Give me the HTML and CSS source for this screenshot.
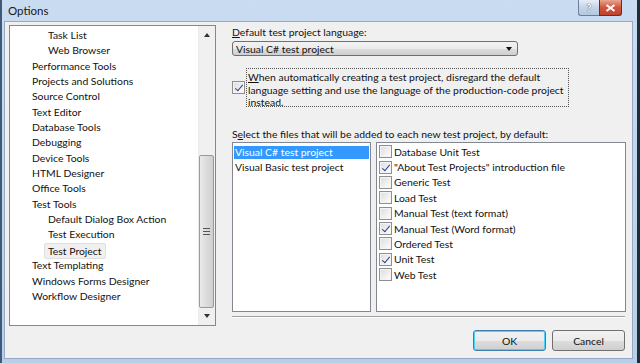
FILE: index.html
```html
<!DOCTYPE html>
<html>
<head>
<meta charset="utf-8">
<link rel="stylesheet" href="styles.css">
</head>
<body>
<div class="window">
  <div class="titlebar">
    <span class="title">Options</span>
    <div class="caption-btns">
      <div class="cbtn help">?</div>
      <div class="cbtn close">
        <svg width="11" height="8" viewBox="0 0 11 8"><path d="M1.5 1 L9.5 7 M9.5 1 L1.5 7" stroke="#fff" stroke-width="2" fill="none"/></svg>
      </div>
    </div>
  </div>
  <div class="client">
    <div class="main">
      <div class="tree">
        <ul class="tree-items">
          <li class="l2">Task List</li>
          <li class="l2">Web Browser</li>
          <li class="l1">Performance Tools</li>
          <li class="l1">Projects and Solutions</li>
          <li class="l1">Source Control</li>
          <li class="l1">Text Editor</li>
          <li class="l1">Database Tools</li>
          <li class="l1">Debugging</li>
          <li class="l1">Device Tools</li>
          <li class="l1">HTML Designer</li>
          <li class="l1">Office Tools</li>
          <li class="l1">Test Tools</li>
          <li class="l2">Default Dialog Box Action</li>
          <li class="l2">Test Execution</li>
          <li class="l2"><span class="sel">Test Project</span></li>
          <li class="l1">Text Templating</li>
          <li class="l1">Windows Forms Designer</li>
          <li class="l1">Workflow Designer</li>
        </ul>
        <div class="vscroll">
          <div class="arrow up"></div>
          <div class="track">
            <div class="thumb"><span class="grip"></span></div>
          </div>
          <div class="arrow down"></div>
        </div>
      </div>
      <div class="panel">
        <div class="label"><u>D</u>efault test project language:</div>
        <div class="combo">
          <span>Visual C# test project</span>
          <span class="combo-arrow"></span>
        </div>
        <div class="check-row">
          <span class="cb checked"></span>
          <div class="focus-text"><u>W</u>hen automatically creating a test project, disregard the default<br>language setting and use the language of the production-code project<br>instead.</div>
        </div>
        <div class="label label2">S<u>e</u>lect the files that will be added to each new test project, by default:</div>
        <div class="lists">
          <ul class="list left-list">
            <li class="hl">Visual C# test project</li>
            <li>Visual Basic test project</li>
          </ul>
          <ul class="list right-list">
            <li><span class="cb"></span>Database Unit Test</li>
            <li><span class="cb checked"></span>"About Test Projects" introduction file</li>
            <li><span class="cb"></span>Generic Test</li>
            <li><span class="cb"></span>Load Test</li>
            <li><span class="cb"></span>Manual Test (text format)</li>
            <li><span class="cb checked"></span>Manual Test (Word format)</li>
            <li><span class="cb"></span>Ordered Test</li>
            <li><span class="cb checked"></span>Unit Test</li>
            <li><span class="cb"></span>Web Test</li>
          </ul>
        </div>
      </div>
    </div>
    <div class="footer">
      <div class="sep"></div>
      <div class="buttons">
        <div class="btn default">OK</div>
        <div class="btn">Cancel</div>
      </div>
    </div>
  </div>
</div>
</body>
</html>
```

FILE: styles.css
```css
* { box-sizing: border-box; }
html, body { margin: 0; padding: 0; }
body {
  width: 640px;
  height: 363px;
  overflow: hidden;
  background: #1f2d3a;
  font-family: Lato, "Noto Sans", sans-serif;
  font-size: 10.4px;
  color: #111;
}
.window {
  width: 637px;
  height: 363px;
  background: linear-gradient(#c9dcf1, #b7cfea);
  border-left: 2px solid #3f5a78;
  display: flex;
  flex-direction: column;
  padding: 0 4px 4px 2px;
}
.titlebar {
  height: 21px;
  display: flex;
  align-items: center;
  justify-content: space-between;
  flex: none;
}
.title {
  font-size: 11.5px;
  color: #1a1a1a;
  margin-left: 4px;
}
.caption-btns {
  display: flex;
  align-self: flex-start;
  margin-right: 11px;
}
.cbtn {
  height: 16px;
  border: 1px solid #6d7f98;
  border-top: none;
  display: flex;
  align-items: center;
  justify-content: center;
}
.help {
  width: 21px;
  border-radius: 0 0 0 3px;
  background: linear-gradient(#e6eef8, #c5d4e6 50%, #b5c8df);
  color: #fff;
  font-weight: bold;
  font-size: 11px;
  text-shadow: 0 0 1px #4a5e7a, 0 0 1px #4a5e7a;
  border-right: none;
}
.close {
  width: 23px;
  border-radius: 0 0 3px 0;
  background: linear-gradient(#e8a493, #d2553c 50%, #c1402a);
  border-color: #6e2b24;
}
.client {
  flex: 1;
  background: #f0f0f0;
  border: 1px solid #98aac2;
  display: flex;
  flex-direction: column;
  padding: 3px 7px 0 4px;
}
.main {
  display: flex;
  height: 287px;
}
.tree {
  width: 207px;
  height: 301px;
  border: 1px solid #828790;
  background: #fff;
  display: flex;
  flex: none;
}
.tree-items {
  list-style: none;
  margin: 0;
  padding: 2px 0 0 0;
  flex: 1;
}
.tree-items li {
  height: 15.35px;
  line-height: 15.35px;
  white-space: nowrap;
}
.tree-items .l1 { padding-left: 22px; }
.tree-items .l2 { padding-left: 38px; }
.tree-items .sel {
  display: inline-block;
  margin-left: -4px;
  padding: 0 3px 0 3px;
  height: 16px;
  line-height: 14px;
  background: #f0f0f0;
  border: 1px solid #e0e0e0;
  border-radius: 2px;
}
.vscroll {
  width: 17px;
  display: flex;
  flex-direction: column;
  background: #f0f0f0;
  border-left: 1px solid #ececec;
}
.arrow {
  height: 17px;
  position: relative;
  flex: none;
}
.arrow::after {
  content: "";
  position: absolute;
  left: 5px;
  width: 0;
  height: 0;
  border-left: 3.5px solid transparent;
  border-right: 3.5px solid transparent;
}
.arrow.up::after { top: 7px; border-bottom: 4px solid #333; }
.arrow.down::after { top: 6px; border-top: 4px solid #333; }
.track {
  flex: 1;
  display: flex;
  flex-direction: column;
  justify-content: flex-end;
}
.thumb {
  height: 153px;
  margin: 0 1px 0 0;
  border: 1px solid #9a9a9a;
  border-radius: 2px;
  background: linear-gradient(90deg, #eaeaea, #dcdcdc 50%, #cfcfcf);
  display: flex;
  align-items: center;
  justify-content: center;
}
.grip {
  width: 7px;
  height: 7px;
  border-top: 1px solid #555;
  border-bottom: 1px solid #555;
  position: relative;
}
.grip::after {
  content: "";
  position: absolute;
  left: 0; right: 0; top: 2px;
  border-top: 1px solid #555;
}
.panel {
  margin-left: 16px;
  width: 394px;
  display: flex;
  flex-direction: column;
}
.label {
  height: 14px;
  line-height: 14px;
}
.combo {
  margin-top: 2px;
  width: 286px;
  height: 19px;
  border: 1px solid #707070;
  border-radius: 3px;
  background: linear-gradient(#f2f2f2, #ebebeb 50%, #dddddd 51%, #cfcfcf);
  display: flex;
  align-items: center;
  justify-content: space-between;
  padding: 0 5px 0 3px;
}
.combo-arrow {
  width: 0; height: 0;
  border-left: 3.5px solid transparent;
  border-right: 3.5px solid transparent;
  border-top: 4px solid #111;
}
.check-row {
  margin-top: 12px;
  display: flex;
  align-items: center;
}
.cb {
  width: 13px;
  height: 13px;
  border: 1px solid #8f8f8f;
  background: linear-gradient(135deg, #dcdcdc, #f4f4f4 70%, #fff);
  display: inline-block;
  position: relative;
  flex: none;
  box-shadow: inset 0 0 0 1px #f4f4f4;
}
.cb.checked::after {
  content: "";
  position: absolute;
  left: 3.5px;
  top: 1px;
  width: 3px;
  height: 7px;
  border-right: 1.6px solid #2a3f86;
  border-bottom: 1.6px solid #2a3f86;
  transform: rotate(40deg);
}
.focus-text {
  margin-left: 1px;
  width: 323px;
  border: 1px dotted #555;
  padding: 2px 0 0 1px;
  line-height: 12.5px;
  height: 39px;
  white-space: nowrap;
}
.label2 { margin-top: 20px; }
.lists {
  margin-top: 1px;
  display: flex;
  gap: 5px;
}
.list {
  list-style: none;
  margin: 0;
  background: #fff;
  border: 1px solid #828790;
  height: 170px;
}
.left-list {
  width: 139px;
  padding: 3px 1px 0 1px;
}
.left-list li {
  height: 13px;
  line-height: 13px;
  padding-left: 1px;
  margin-bottom: 2px;
  white-space: nowrap;
}
.left-list li.hl {
  background: #3399ff;
  color: #fff;
}
.right-list {
  width: 250px;
  padding: 1px 0 0 2px;
}
.right-list li {
  height: 15.375px;
  display: flex;
  align-items: center;
  white-space: nowrap;
}
.right-list .cb { margin-right: 2px; }
.footer {
  display: flex;
  flex-direction: column;
  align-items: flex-end;
  margin-top: 4px;
}
.sep {
  width: 393px;
  height: 2px;
  border-top: 1px solid #a0a0a0;
  border-bottom: 1px solid #fff;
}
.buttons {
  margin-top: 12px;
  display: flex;
  gap: 6px;
}
.btn {
  width: 73px;
  height: 21px;
  border: 1px solid #707070;
  border-radius: 3px;
  background: linear-gradient(#f2f2f2, #ebebeb 50%, #dddddd 51%, #cfcfcf);
  display: flex;
  align-items: center;
  justify-content: center;
}
.btn.default {
  border-color: #3c7fb1;
  box-shadow: inset 0 0 0 1px #48d4fc;
}
```
